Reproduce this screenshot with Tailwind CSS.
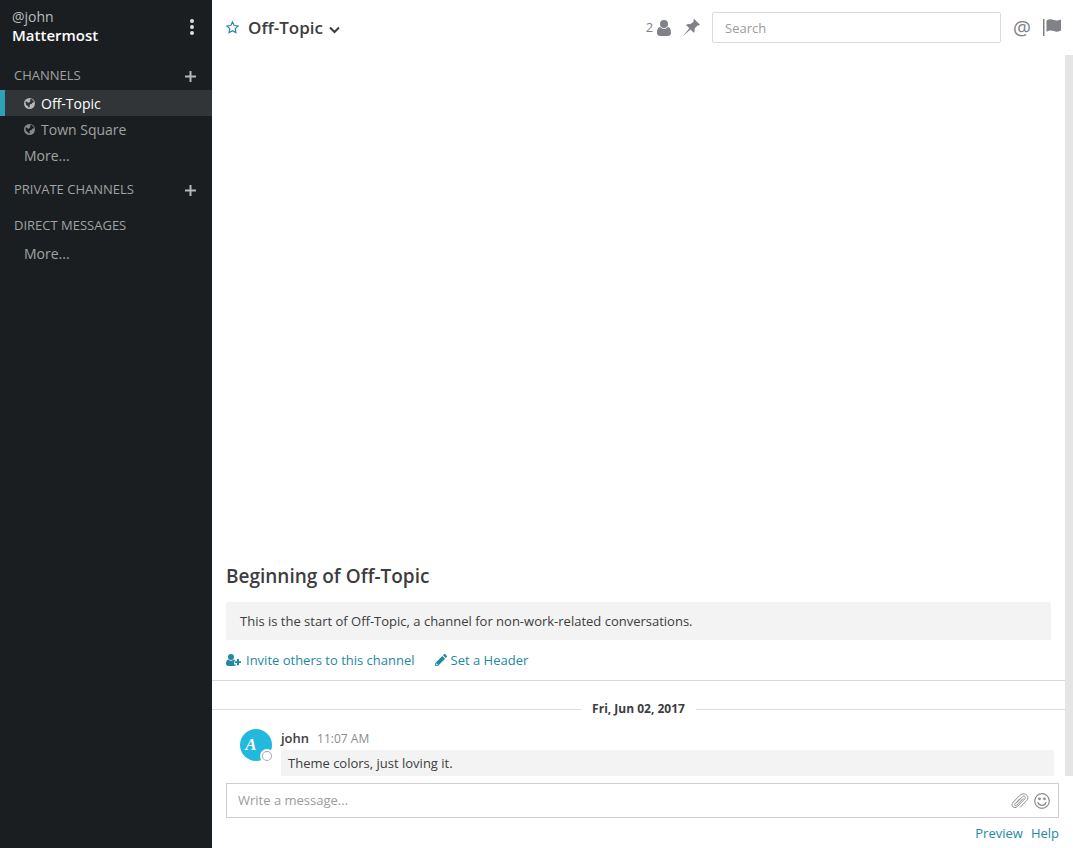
<!DOCTYPE html>
<html lang="en">
<head>
<meta charset="utf-8">
<title>Off-Topic - Mattermost</title>
<script src="https://cdn.jsdelivr.net/npm/@tailwindcss/browser@4"></script>
</head>
<body class="flex h-screen overflow-hidden bg-white font-['Open_Sans',sans-serif] text-[13px] text-[#3d3c40]">
<aside class="flex w-[212px] shrink-0 flex-col bg-[#1b1e20] text-[#a0a2a3]">
  <header class="flex h-[62px] items-start justify-between pt-2 pr-4 pl-3">
    <div>
      <div class="text-[14px] leading-[18px] text-[#bcbdbe]">@john</div>
      <div class="text-[15px] leading-[18px] font-semibold text-white">Mattermost</div>
    </div>
    <button aria-label="Main menu" class="mt-2 text-[#dddddd]"><svg class="h-5 w-2" viewBox="0 0 8 20" fill="currentColor"><circle cx="4" cy="5" r="2"/><circle cx="4" cy="11" r="2"/><circle cx="4" cy="17" r="2"/></svg></button>
  </header>
  <nav>
    <section class="mb-2">
      <div class="flex h-7 items-center justify-between pr-4 pl-[14px]"><h4>CHANNELS</h4>
        <button aria-label="Add channel" class="text-[#b5b6b7]"><svg class="size-[11px]" viewBox="0 0 11 11" stroke="currentColor" stroke-width="2"><path d="M5.5 0v11M0 5.500h11"/></svg></button></div>
      <a href="#off-topic" class="flex h-[26px] items-center gap-[6px] border-l-5 border-[#2ba3b5] bg-[#323537] pl-[19px] text-[14px] text-white">
        <svg class="size-[11px] text-[#b5b6b7]" viewBox="0 0 12 12"><circle cx="6" cy="6" r="6" fill="currentColor"/><path d="M1.500 4.200L3 3.800l1 1.200 1.400.2L7 3.200l-.6-1.600 1.800-.4 2 1.600.8 1.800-1.800.2-.6 1.600-1.800.4L6 8.200l.4 1.600-1.200.6-1.200-1.800-1.600-1z" fill="#323537"/></svg>Off-Topic</a>
      <a href="#town-square" class="flex h-[26px] items-center gap-[6px] pl-6 text-[14px]">
        <svg class="size-[11px] text-[#858788]" viewBox="0 0 12 12"><circle cx="6" cy="6" r="6" fill="currentColor"/><path d="M1.500 4.200L3 3.800l1 1.200 1.400.2L7 3.200l-.6-1.600 1.800-.4 2 1.600.8 1.800-1.800.2-.6 1.600-1.800.4L6 8.200l.4 1.600-1.200.6-1.200-1.800-1.600-1z" fill="#1b1e20"/></svg>Town Square</a>
      <a href="#more" class="flex h-[26px] items-center pl-6 text-[14px]">More...</a>
    </section>
    <section class="mb-2">
      <div class="flex h-7 items-center justify-between pr-4 pl-[14px]"><h4>PRIVATE CHANNELS</h4>
        <button aria-label="Add private channel" class="text-[#b5b6b7]"><svg class="size-[11px]" viewBox="0 0 11 11" stroke="currentColor" stroke-width="2"><path d="M5.5 0v11M0 5.500h11"/></svg></button></div>
    </section>
    <section>
      <div class="flex h-7 items-center pl-[14px]"><h4>DIRECT MESSAGES</h4></div>
      <a href="#more-direct" class="flex h-[26px] items-center pl-6 text-[14px]">More...</a>
    </section>
  </nav>
</aside>
<main class="flex min-w-0 flex-1 flex-col">
  <header class="flex h-[55px] shrink-0 items-center pr-3 pl-[14px]">
    <button aria-label="Favorite channel" class="text-[#2389a0]"><svg class="size-[13px]" viewBox="0 0 14 14" fill="none" stroke="currentColor" stroke-width="1.200"><path d="M7 1l1.800 3.900 4.200.5-3.100 2.900.8 4.200L7 10.500l-3.700 2 .8-4.200L1 5.400l4.200-.5z"/></svg></button>
    <button class="ml-[9px] flex items-center gap-[6px] text-[17px] font-semibold">Off-Topic<svg class="mt-1 h-2 w-[11px]" viewBox="0 0 11 8" fill="none" stroke="currentColor" stroke-width="2"><path d="M1 1.500l4.500 4.500L10 1.500"/></svg></button>
    <div class="ml-auto flex items-center text-[#808287]">
      <button aria-label="2 members" class="flex items-center gap-1">2<svg class="h-4 w-[14px]" viewBox="0 0 14 16" fill="currentColor"><circle cx="7" cy="4" r="4"/><path d="M3.200 7C.8 7.200 0 10 0 12.800 0 14.800 1.200 16 3 16h8c1.800 0 3-1.200 3-3.200C14 10 13.200 7.200 10.800 7 9.800 8.300 8.500 8.800 7 8.800S4.200 8.300 3.200 7z"/></svg></button>
      <button aria-label="Pinned posts" class="ml-3"><svg class="size-[17px]" viewBox="0 0 17 17" fill="currentColor"><path d="M11.200 0L17 5.800l-1.200.8-1.300-.2-2.900 3c.4 1.600.2 3.100-.8 4.400L7.500 10.500 0 17l6.300-7.800L3 6c1.300-.9 2.700-1.200 4.400-.7l3.300-2.900-.3-1.400z"/></svg></button>
      <input type="search" aria-label="Search" placeholder="Search" class="ml-3 h-[31px] w-[289px] rounded-[2px] border border-[#dadada] px-3 text-[13px] outline-none placeholder:text-[#9b9b9b]">
      <button aria-label="Recent mentions" class="ml-3 text-[20px] leading-5">@</button>
      <button aria-label="Flagged posts" class="ml-3"><svg class="h-[17px] w-[18px]" viewBox="0 0 18 17" fill="currentColor"><path d="M0 0h1.500v17H0zM3.500 1.500c3-1.700 5-1.700 7.500-.5 2 .9 4 .5 7-.6v11.200c-3 1.400-5 1.500-7.200.5-2.400-1.100-4.400-.9-7.300.7z"/></svg></button>
    </div>
  </header>
  <div class="flex min-h-0 flex-1">
    <div class="flex min-w-0 flex-1 flex-col justify-end">
      <section class="border-b border-[#d8d8d8] pr-[14px] pb-[10px] pl-[14px]">
        <h1 class="mb-3 text-[19px] leading-7 font-semibold">Beginning of Off-Topic</h1>
        <p class="rounded-[2px] bg-[#f3f3f3] px-[14px] py-[9px] leading-5">This is the start of Off-Topic, a channel for non-work-related conversations.</p>
        <div class="mt-[10px] flex gap-5 leading-5 text-[#2389a0]">
          <a href="#invite" class="flex items-center gap-[5px]"><svg class="h-3 w-[15px]" viewBox="0 0 15 12" fill="currentColor"><circle cx="5" cy="3" r="3"/><path d="M2.500 5.500C.6 5.700 0 7.700 0 9.600 0 11.200.8 12 2.200 12h5.800c1.300 0 1.900-.6 1.900-1.500H8V7.300h1.500C9.200 6.300 8.600 5.600 7.500 5.500 6 7.200 4 7.200 2.500 5.500z"/><path d="M11 5h2v2.200h2v1.800h-2V11.200h-2V9H8.800V7.200H11z"/></svg>Invite others to this channel</a>
          <a href="#header" class="flex items-center gap-1"><svg class="size-3" viewBox="0 0 12 12" fill="currentColor"><path fill-rule="evenodd" d="M7.300 1.900l2.800 2.800L3.100 11.700 0 12l.3-3.100zM1.200 9.400L1 10.600l.5.5 1.200-.3v-.9h-.6v-.5zM8 1.200L8.900.3c.4-.4 1-.4 1.400 0l1.400 1.400c.4.4.4 1 0 1.400l-.9.9z"/></svg>Set a Header</a>
        </div>
      </section>
      <div class="mt-[18px] mb-[9px] flex items-center gap-[10px] text-[12px] leading-5 font-bold"><hr class="flex-1 border-[#dddddd]"><time class="px-px">Fri, Jun 02, 2017</time><hr class="flex-1 border-[#dddddd]"></div>
      <article class="flex gap-[9px] pr-[11px] pl-7">
        <div class="relative mt-px size-8 shrink-0">
          <div class="flex size-8 items-center justify-center rounded-full bg-[#23b9df] pr-[10px] font-['Liberation_Serif',serif] text-[17px] font-bold text-white italic">A</div>
          <span class="absolute -right-0.5 -bottom-0.5 size-[14px] rounded-full border-2 border-white bg-[#aaaaaa] p-px"><span class="block size-full rounded-full bg-white"></span></span>
        </div>
        <div class="min-w-0 flex-1">
          <div class="flex h-[22px] items-center gap-2"><strong class="font-semibold">john</strong><time class="text-[12px] text-[#8b8b8d]">11:07 AM</time></div>
          <p class="bg-[#f3f3f3] px-[7px] py-[3px] text-[13px] leading-5">Theme colors, just loving it.</p>
        </div>
      </article>
    </div>
    <div class="w-2 shrink-0 bg-[#e5e5e5]"></div>
  </div>
  <footer class="shrink-0 pt-[7px] pr-[14px] pb-[5px] pl-[14px]">
    <div class="flex h-[35px] items-center gap-[5px] border border-[#cfcfcf] pr-2 pl-[11px] text-[#8c8c8c]">
      <input type="text" aria-label="Write a message" placeholder="Write a message..." class="min-w-0 flex-1 text-[13px] outline-none placeholder:text-[#9b9b9b]">
      <button aria-label="Attach file"><svg class="h-4 w-[18px]" viewBox="0 0 18 16" fill="none" stroke="currentColor" stroke-linecap="round"><path d="M5.500 9.800l6-6.100c1.700-1.700 3.900.4 2.300 2.100l-7.500 7.700c-2.900 2.900-7.300-1-4.300-4.200l7-7.100c3.700-3.700 10.500.7 6.800 5.200l-6.500 6.800M12 5.700l-6.500 6.600c-1.100 1-2.500-.4-1.500-1.500L9 5.700"/></svg></button>
      <button aria-label="Insert emoji"><svg class="size-4" viewBox="0 0 16 16" fill="none" stroke="currentColor" stroke-width="1.200"><circle cx="8" cy="8" r="7.300"/><path d="M4 9.500c1.200 3.700 6.800 3.700 8 0" stroke-linecap="round"/><circle cx="5.500" cy="5.800" r=".8" fill="currentColor"/><circle cx="10.500" cy="5.800" r=".8" fill="currentColor"/></svg></button>
    </div>
    <div class="mt-[5px] flex justify-end gap-2 text-[13px] leading-5 text-[#2389a0]"><a href="#preview">Preview</a><a href="#help">Help</a></div>
  </footer>
</main>
</body>
</html>
